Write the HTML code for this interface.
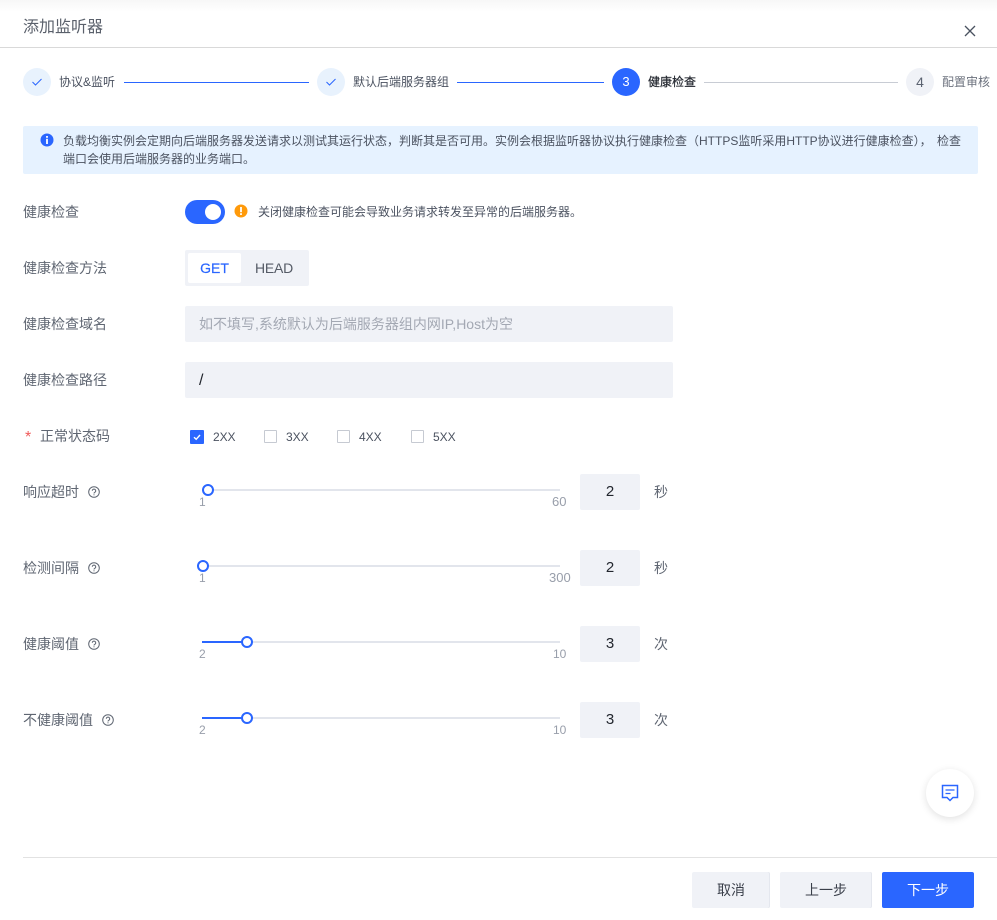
<!DOCTYPE html>
<html lang="zh">
<head>
<meta charset="utf-8">
<style>
html,body{margin:0;padding:0;background:#fff}
body{width:997px;height:920px;position:relative;overflow:hidden;font-family:"Liberation Sans","Noto Sans CJK SC",sans-serif;color:#5b6270}
.a{position:absolute}
.t{position:absolute;white-space:nowrap;line-height:20px;height:20px}
.s14{font-size:14px}.s12{font-size:12px}
.lb{font-size:14px;color:#5f6672}
.c{position:absolute;width:28px;height:28px;border-radius:50%;top:68px;text-align:center;line-height:28px;font-size:13px}
.ln{position:absolute;height:1px;top:82px;background:#2a66ff}
.st{font-size:12px;top:72px;color:#4b5260}
.box{position:absolute;background:#f0f2f7;border-radius:2px}
.cb{position:absolute;top:430px;width:11px;height:11px;border:1.5px solid #c6cad2;border-radius:1px;background:#fff}
.tr{position:absolute;left:202px;width:358px;height:2px;background:#e2e5ec}
.bl{position:absolute;left:202px;width:45px;height:2px;background:#2a66ff}
.kn{position:absolute;width:8px;height:8px;border:2px solid #2a66ff;border-radius:50%;background:#fff}
.tk{font-size:12px;color:#989eaa}
.tk3{font-size:13px;color:#989eaa}
.num{position:absolute;left:580px;width:60px;height:36px;background:#f0f2f7;border-radius:2px;text-align:center;line-height:36px;font-size:15px;color:#22262e}
.btn{position:absolute;top:872px;height:36px;line-height:36px;text-align:center;font-size:14px;border-radius:2px;background:#f0f2f7;color:#3a3f4a}
.g{box-shadow:inset -1px 0 0 #e4e7ee}
</style>
</head>
<body>
<div class="a" style="left:0;top:0;width:997px;height:12px;background:linear-gradient(#f7f7f7,#fff)"></div>
<div class="t" style="left:23px;top:18px;font-size:16px;color:#5a606b">添加监听器</div>
<svg class="a" style="left:964px;top:25px" width="12" height="12" viewBox="0 0 12 12"><path d="M1 1L11 11M11 1L1 11" stroke="#4a5260" stroke-width="1.300" fill="none"/></svg>
<div class="a" style="left:0;top:47px;width:997px;height:1px;background:#d9d9d9"></div>

<div class="c" style="left:23px;background:#e8f2fd"><svg width="12" height="10" viewBox="0 0 12 10" style="margin-top:9px;display:block;margin-left:8px"><path d="M1.500 5L4.500 8L10.500 2" stroke="#2a66ff" stroke-width="1" fill="none"/></svg></div>
<div class="t st" style="left:59px">协议&amp;监听</div>
<div class="ln" style="left:124px;width:185px"></div>
<div class="c" style="left:317px;background:#e8f2fd"><svg width="12" height="10" viewBox="0 0 12 10" style="margin-top:9px;display:block;margin-left:8px"><path d="M1.500 5L4.500 8L10.500 2" stroke="#2a66ff" stroke-width="1" fill="none"/></svg></div>
<div class="t st" style="left:353px">默认后端服务器组</div>
<div class="ln" style="left:457px;width:147px"></div>
<div class="c" style="left:612px;background:#2a66ff;color:#fff">3</div>
<div class="t st" style="left:648px;color:#22262e;-webkit-text-stroke:.2px #22262e">健康检查</div>
<div class="ln" style="left:704px;width:194px;background:#c8ccd4"></div>
<div class="c" style="left:906px;background:#f0f2f7;color:#5b6270;font-size:14px">4</div>
<div class="t st" style="left:942px;color:#6c727e">配置审核</div>

<div class="a" style="left:23px;top:126px;width:955px;height:48px;background:#e6f2ff;border-radius:2px"></div>
<svg class="a" style="left:40px;top:133px" width="14" height="14" viewBox="0 0 14 14"><circle cx="7" cy="7" r="6.500" fill="#2a66ff"/><rect x="6.100" y="3" width="1.800" height="1.800" fill="#fff"/><rect x="6.100" y="5.800" width="1.800" height="5.200" fill="#fff"/></svg>
<div class="t s12" style="left:63px;top:131px;color:#4b5260;word-spacing:2px">负载均衡实例会定期向后端服务器发送请求以测试其运行状态，判断其是否可用。实例会根据监听器协议执行健康检查（HTTPS监听采用HTTP协议进行健康检查）， 检查</div>
<div class="t s12" style="left:63px;top:149px;color:#4b5260">端口会使用后端服务器的业务端口。</div>

<div class="t lb" style="left:23px;top:202px">健康检查</div>
<div class="a" style="left:185px;top:200px;width:40px;height:24px;border-radius:12px;background:#2a66ff"></div>
<div class="a" style="left:205px;top:204px;width:16px;height:16px;border-radius:50%;background:#fff"></div>
<svg class="a" style="left:234px;top:204px" width="14" height="14" viewBox="0 0 14 14"><circle cx="7" cy="7" r="6.500" fill="#ff9a0a"/><rect x="6.100" y="3" width="1.800" height="5.200" fill="#fff"/><rect x="6.100" y="9.200" width="1.800" height="1.800" fill="#fff"/></svg>
<div class="t s12" style="left:258px;top:202px;color:#4b5260">关闭健康检查可能会导致业务请求转发至异常的后端服务器。</div>

<div class="t lb" style="left:23px;top:258px">健康检查方法</div>
<div class="box" style="left:185px;top:250px;width:124px;height:36px"></div>
<div class="a" style="left:188px;top:253px;width:53px;height:30px;background:#fff;border-radius:2px;text-align:center;line-height:30px;font-size:14px;color:#2a66ff;-webkit-text-stroke:.2px #2a66ff">GET</div>
<div class="t s14" style="left:255px;top:258px;color:#555b66;letter-spacing:-.2px">HEAD</div>

<div class="t lb" style="left:23px;top:314px">健康检查域名</div>
<div class="box" style="left:185px;top:306px;width:488px;height:36px"></div>
<div class="t s14" style="left:199px;top:314px;color:#a3a8b3">如不填写,系统默认为后端服务器组内网IP,Host为空</div>

<div class="t lb" style="left:23px;top:370px">健康检查路径</div>
<div class="box" style="left:185px;top:362px;width:488px;height:36px"></div>
<div class="t" style="left:199px;top:371px;color:#22262e;font-size:16px">/</div>

<div class="t" style="left:25px;top:428px;color:#f05a5a;font-size:16px">*</div>
<div class="t lb" style="left:40px;top:426px">正常状态码</div>
<div class="a" style="left:190px;top:430px;width:14px;height:14px;background:#2a66ff;border-radius:1px"><svg width="14" height="14" viewBox="0 0 14 14" style="display:block"><path d="M4 7.200L6.200 9.300L10 5" stroke="#fff" stroke-width="1.400" fill="none"/></svg></div>
<div class="t s12" style="left:213px;top:427px;color:#4b5260;letter-spacing:-.1px">2XX</div>
<div class="cb" style="left:264px"></div>
<div class="t s12" style="left:286px;top:427px;color:#4b5260">3XX</div>
<div class="cb" style="left:337px"></div>
<div class="t s12" style="left:359px;top:427px;color:#4b5260">4XX</div>
<div class="cb" style="left:411px"></div>
<div class="t s12" style="left:433px;top:427px;color:#4b5260">5XX</div>

<div class="t lb" style="left:23px;top:482px">响应超时</div>
<svg class="a" style="left:88px;top:486px" width="12" height="12" viewBox="0 0 12 12"><circle cx="6" cy="6" r="5.300" fill="none" stroke="#5f6672" stroke-width="1"/><path d="M4.300 4.800A1.700 1.700 0 1 1 6.800 6.300Q6 6.700 6 7.500" fill="none" stroke="#5f6672" stroke-width="1"/><rect x="5.500" y="8.300" width="1" height="1" fill="#5f6672"/></svg>
<div class="tr" style="top:489px"></div>
<div class="kn" style="left:202px;top:484px"></div>
<div class="t tk" style="left:199px;top:492px">1</div>
<div class="t tk3" style="left:552px;top:492px">60</div>
<div class="num" style="top:474px">2</div>
<div class="t lb" style="left:654px;top:482px">秒</div>

<div class="t lb" style="left:23px;top:558px">检测间隔</div>
<svg class="a" style="left:88px;top:562px" width="12" height="12" viewBox="0 0 12 12"><circle cx="6" cy="6" r="5.300" fill="none" stroke="#5f6672" stroke-width="1"/><path d="M4.300 4.800A1.700 1.700 0 1 1 6.800 6.300Q6 6.700 6 7.500" fill="none" stroke="#5f6672" stroke-width="1"/><rect x="5.500" y="8.300" width="1" height="1" fill="#5f6672"/></svg>
<div class="tr" style="top:565px"></div>
<div class="kn" style="left:197px;top:560px"></div>
<div class="t tk" style="left:199px;top:568px">1</div>
<div class="t tk3" style="left:549px;top:568px">300</div>
<div class="num" style="top:550px">2</div>
<div class="t lb" style="left:654px;top:558px">秒</div>

<div class="t lb" style="left:23px;top:634px">健康阈值</div>
<svg class="a" style="left:88px;top:638px" width="12" height="12" viewBox="0 0 12 12"><circle cx="6" cy="6" r="5.300" fill="none" stroke="#5f6672" stroke-width="1"/><path d="M4.300 4.800A1.700 1.700 0 1 1 6.800 6.300Q6 6.700 6 7.500" fill="none" stroke="#5f6672" stroke-width="1"/><rect x="5.500" y="8.300" width="1" height="1" fill="#5f6672"/></svg>
<div class="tr" style="top:641px"></div>
<div class="bl" style="top:641px"></div>
<div class="kn" style="left:241px;top:636px"></div>
<div class="t tk" style="left:199px;top:644px">2</div>
<div class="t tk" style="left:553px;top:644px">10</div>
<div class="num" style="top:626px">3</div>
<div class="t lb" style="left:654px;top:634px">次</div>

<div class="t lb" style="left:23px;top:710px">不健康阈值</div>
<svg class="a" style="left:102px;top:714px" width="12" height="12" viewBox="0 0 12 12"><circle cx="6" cy="6" r="5.300" fill="none" stroke="#5f6672" stroke-width="1"/><path d="M4.300 4.800A1.700 1.700 0 1 1 6.800 6.300Q6 6.700 6 7.500" fill="none" stroke="#5f6672" stroke-width="1"/><rect x="5.500" y="8.300" width="1" height="1" fill="#5f6672"/></svg>
<div class="tr" style="top:717px"></div>
<div class="bl" style="top:717px"></div>
<div class="kn" style="left:241px;top:712px"></div>
<div class="t tk" style="left:199px;top:720px">2</div>
<div class="t tk" style="left:553px;top:720px">10</div>
<div class="num" style="top:702px">3</div>
<div class="t lb" style="left:654px;top:710px">次</div>

<div class="a" style="left:926px;top:769px;width:48px;height:48px;border-radius:50%;background:#fff;box-shadow:0 2px 8px rgba(0,0,0,.12)"></div>
<svg class="a" style="left:941px;top:784px" width="18" height="18" viewBox="0 0 18 18"><path d="M1.500 1.500H16.500V13.500H12L9 16.500L6 13.500H1.500Z" fill="none" stroke="#2a66ff" stroke-width="1.500"/><path d="M4.500 6H13.500M4.500 9.500H9.500" stroke="#2a66ff" stroke-width="1.300" fill="none"/></svg>

<div class="a" style="left:23px;top:857px;width:974px;height:1px;background:#e2e2e2"></div>
<div class="btn g" style="left:692px;width:78px">取消</div>
<div class="btn g" style="left:780px;width:92px">上一步</div>
<div class="btn" style="left:882px;width:92px;background:#2a66ff;color:#fff">下一步</div>
</body>
</html>
